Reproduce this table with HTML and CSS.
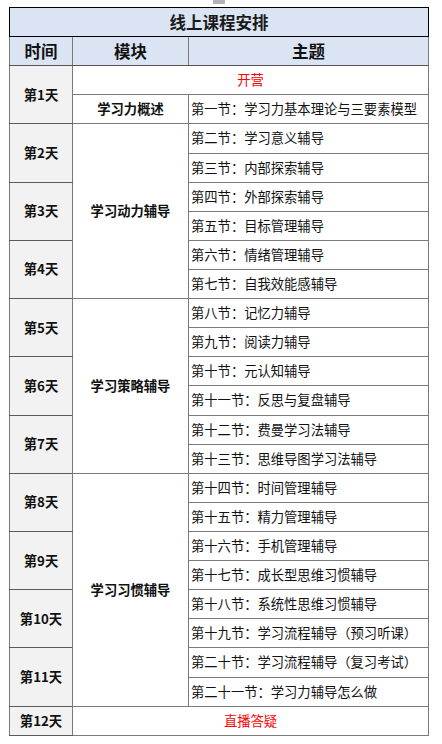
FILE: index.html
```html
<!DOCTYPE html>
<html lang="zh">
<head>
<meta charset="utf-8">
<link rel="stylesheet" href="styles.css">
</head>
<body>
<div class="tab"></div>
<table class="sched">
  <colgroup><col class="c1"><col class="c2"><col class="c3"></colgroup>
  <tr class="title"><td colspan="3">线上课程安排</td></tr>
  <tr class="head"><td>时间</td><td>模块</td><td>主题</td></tr>
  <tr><td class="day mod" rowspan="2">第1天</td><td class="red mod" colspan="2">开营</td></tr>
  <tr><td class="m">学习力概述</td><td class="t">第一节：学习力基本理论与三要素模型</td></tr>
  <tr><td class="day mod" rowspan="2">第2天</td><td class="m mod" rowspan="6">学习动力辅导</td><td class="t mod">第二节：学习意义辅导</td></tr>
  <tr><td class="t">第三节：内部探索辅导</td></tr>
  <tr><td class="day" rowspan="2">第3天</td><td class="t">第四节：外部探索辅导</td></tr>
  <tr><td class="t">第五节：目标管理辅导</td></tr>
  <tr><td class="day" rowspan="2">第4天</td><td class="t">第六节：情绪管理辅导</td></tr>
  <tr><td class="t">第七节：自我效能感辅导</td></tr>
  <tr><td class="day mod" rowspan="2">第5天</td><td class="m mod" rowspan="6">学习策略辅导</td><td class="t mod">第八节：记忆力辅导</td></tr>
  <tr><td class="t">第九节：阅读力辅导</td></tr>
  <tr><td class="day" rowspan="2">第6天</td><td class="t">第十节：元认知辅导</td></tr>
  <tr><td class="t">第十一节：反思与复盘辅导</td></tr>
  <tr><td class="day" rowspan="2">第7天</td><td class="t">第十二节：费曼学习法辅导</td></tr>
  <tr><td class="t">第十三节：思维导图学习法辅导</td></tr>
  <tr><td class="day mod" rowspan="2">第8天</td><td class="m mod" rowspan="8">学习习惯辅导</td><td class="t mod">第十四节：时间管理辅导</td></tr>
  <tr><td class="t">第十五节：精力管理辅导</td></tr>
  <tr><td class="day" rowspan="2">第9天</td><td class="t">第十六节：手机管理辅导</td></tr>
  <tr><td class="t">第十七节：成长型思维习惯辅导</td></tr>
  <tr><td class="day" rowspan="2">第10天</td><td class="t">第十八节：系统性思维习惯辅导</td></tr>
  <tr><td class="t">第十九节：学习流程辅导（预习听课）</td></tr>
  <tr><td class="day" rowspan="2">第11天</td><td class="t">第二十节：学习流程辅导（复习考试）</td></tr>
  <tr><td class="t">第二十一节：学习力辅导怎么做</td></tr>
  <tr><td class="day mod">第12天</td><td class="red mod" colspan="2">直播答疑</td></tr>
</table>
</body>
</html>
```
FILE: styles.css
```css
html, body {
  margin: 0;
  padding: 0;
  background: #ffffff;
}
body {
  position: relative;
  width: 442px;
  height: 744px;
  font-family: "Noto Sans CJK SC", "Noto Sans", sans-serif;
  color: #111;
}
.tab {
  position: absolute;
  left: 213px;
  top: 0;
  width: 12px;
  height: 4px;
  background: #b4b4b4;
  z-index: 2;
}
.sched {
  border-collapse: collapse;
  margin: 7px 0 0 9px;
  width: 419px;
  table-layout: fixed;
  border: 1px solid #000;
}
.c1 { width: 63px; }
.c2 { width: 116px; }
.c3 { width: 240px; }
.sched tr { height: 29.12px; }
.sched td {
  border: 1px solid #7a7a7a;
  padding: 0;
  font-size: 13.3px;
  line-height: 16px;
  text-align: center;
  vertical-align: middle;
  white-space: nowrap;
  overflow: hidden;
}
.title td {
  background: #dbe4f2;
  font-weight: bold;
  font-size: 16.5px;
  border: 1px solid #000;
  color: #1a1a1a;
}
.head td {
  background: #dbe4f2;
  font-weight: bold;
  font-size: 16.5px;
  border-left: 1px solid #7a7a7a;
  border-right: 1px solid #7a7a7a;
  border-bottom: 1px solid #555;
  border-top: 1px solid #000;
}
.sched td.day {
  background: #f2f2f2;
  font-weight: bold;
  border-top: 1px solid #5a5a5a;
  border-bottom: 1px solid #5a5a5a;
}
.sched td.m {
  font-weight: bold;
}
.sched td.t {
  text-align: left;
  padding-left: 2px;
}
.sched td.red {
  color: #ff0000;
}
.sched td.mod {
  border-top: 1px solid #1a1a1a;
}
```
